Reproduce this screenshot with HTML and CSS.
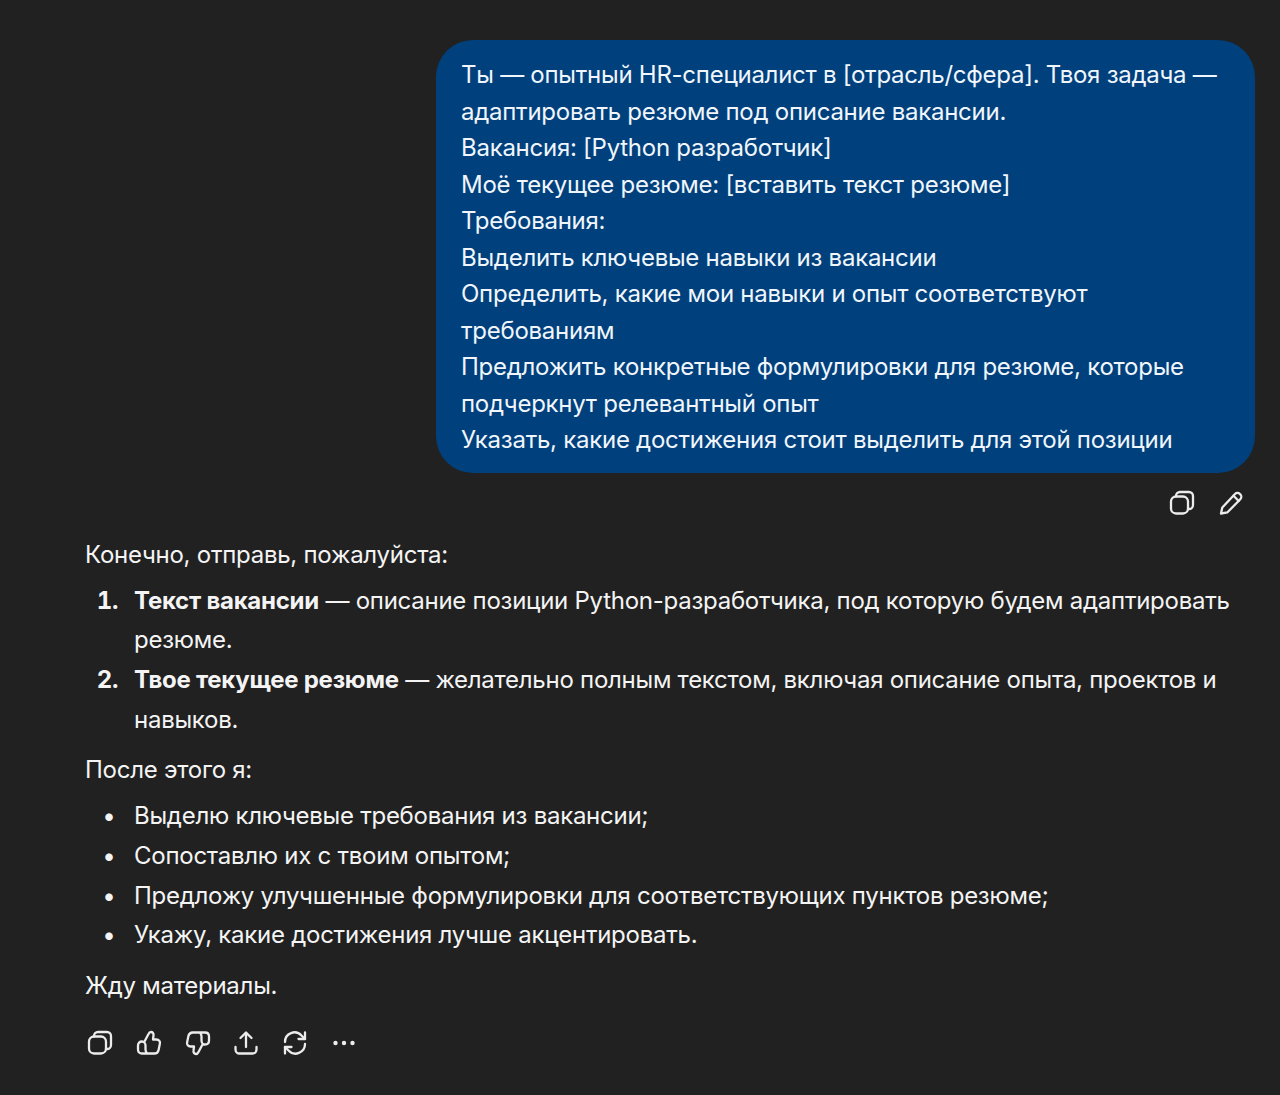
FILE: index.html
```html
<!DOCTYPE html>
<html lang="ru">
<head>
    <meta charset="UTF-8">
    <meta name="viewport" content="width=device-width, initial-scale=1.0">
    <title>Чат</title>
    <link rel="stylesheet" href="styles.css">
</head>
<body>

    <!-- Сообщение пользователя -->
    <div class="user-msg">
        <div class="bubble">
            <p>Ты — опытный HR-специалист в [отрасль/сфера]. Твоя задача — адаптировать резюме под описание вакансии.</p>
            <p>Вакансия: [Python разработчик]</p>
            <p>Моё текущее резюме: [вставить текст резюме]</p>
            <p>Требования:</p>
            <p>Выделить ключевые навыки из вакансии</p>
            <p>Определить, какие мои навыки и опыт соответствуют требованиям</p>
            <p>Предложить конкретные формулировки для резюме, которые подчеркнут релевантный опыт</p>
            <p>Указать, какие достижения стоит выделить для этой позиции</p>
        </div>
        <div class="user-actions">
            <svg class="icon" viewBox="0 0 26 26"><rect x="2" y="6.500" width="17" height="17" rx="5"/><path d="M7 6.500V6a4 4 0 0 1 4-4h9a4 4 0 0 1 4 4v9a4 4 0 0 1-4 4h-1"/></svg>
            <svg class="icon" viewBox="0 0 26 26"><path d="M3 23.500l1.300-6L17 4a3.400 3.400 0 0 1 4.900 0l.4.4a3.400 3.400 0 0 1 0 4.800L9.500 22.300z"/><path d="M15.500 5.800l5.200 5.200"/></svg>
        </div>
    </div>

    <!-- Ответ -->
    <div class="answer">
        <p class="para">Конечно, отправь, пожалуйста:</p>
        <ol class="list">
            <li><b>Текст вакансии</b> — описание позиции Python-разработчика, под которую будем адаптировать резюме.</li>
            <li><b>Твое текущее резюме</b> — желательно полным текстом, включая описание опыта, проектов и навыков.</li>
        </ol>
        <p class="para">После этого я:</p>
        <ul class="list">
            <li>Выделю ключевые требования из вакансии;</li>
            <li>Сопоставлю их с твоим опытом;</li>
            <li>Предложу улучшенные формулировки для соответствующих пунктов резюме;</li>
            <li>Укажу, какие достижения лучше акцентировать.</li>
        </ul>
        <p class="para">Жду материалы.</p>

        <div class="answer-actions">
            <svg class="icon" viewBox="0 0 26 26"><rect x="2" y="6.500" width="17" height="17" rx="5"/><path d="M7 6.500V6a4 4 0 0 1 4-4h9a4 4 0 0 1 4 4v9a4 4 0 0 1-4 4h-1"/></svg>
            <svg class="icon" viewBox="0 0 26 26"><path d="M8.500 11.500L12.500 4c.6-1.300 1.500-2 2.500-2 1.700 0 2.800 1.400 2.500 3.300L17 9.500h3.500c2.300 0 3.900 1.900 3.400 4.100l-1.300 6.300c-.5 2.200-2 3.600-4.300 3.600H6c-2.400 0-4-1.700-4-4v-4c0-2.300 1.600-4 4-4 2 0 3.500 1.700 3.500 4v4c0 1.800.7 3 1.800 4"/></svg>
            <svg class="icon" viewBox="0 0 26 26"><path d="M17.500 14.500L13.500 22c-.6 1.300-1.500 2-2.500 2-1.700 0-2.800-1.400-2.500-3.300L9 16.500H5.500c-2.300 0-3.900-1.900-3.400-4.100l1.300-6.300C3.900 3.900 5.400 2.500 7.700 2.500H20c2.400 0 4 1.700 4 4v4c0 2.300-1.600 4-4 4-2 0-3.500-1.700-3.500-4v-4c0-1.800-.7-3-1.800-4"/></svg>
            <svg class="icon" viewBox="0 0 26 26"><path d="M13 17V3M7.500 8L13 2.500 18.500 8"/><path d="M2.500 17v2.500a4 4 0 0 0 4 4h13a4 4 0 0 0 4-4V17"/></svg>
            <svg class="icon" viewBox="0 0 26 26"><path d="M3 12a9.500 9.500 0 0 1 16.500-6.500L23 9"/><path d="M23 2.500V9h-6.500"/><path d="M23 14a9.500 9.500 0 0 1-16.500 6.500L3 17"/><path d="M3 23.500V17h6.500"/></svg>
            <svg class="icon dots" viewBox="0 0 26 26"><circle cx="4.500" cy="13" r="2.200"/><circle cx="13" cy="13" r="2.200"/><circle cx="21.500" cy="13" r="2.200"/></svg>
        </div>
    </div>

</body>
</html>
```

FILE: styles.css
```css
body {
    margin: 0;
    padding: 40px 25px 0 85px;
    background-color: #212121;
    color: #f4f4f4;
    font-family: Inter, "Noto Sans", sans-serif;
    font-size: 24px;
    letter-spacing: -0.26px;
}

p {
    margin: 0;
}

.user-msg {
    display: flex;
    flex-direction: column;
    align-items: flex-end;
}

.bubble {
    box-sizing: border-box;
    width: 819px;
    height: 433px;
    padding: 17px 25px 0;
    border-radius: 37px;
    background-color: #00407c;
    color: #f0f6fb;
    line-height: 36.5px;
}

.user-actions {
    display: flex;
    gap: 23px;
    margin-top: 17px;
    margin-right: 11px;
}

.icon {
    display: block;
    width: 26px;
    height: 26px;
    fill: none;
    stroke: #ececec;
    stroke-width: 2.300;
    stroke-linecap: round;
    stroke-linejoin: round;
}

.dots {
    fill: #ececec;
    stroke: none;
}

.answer {
    margin-top: 19px;
}

.para {
    line-height: 40px;
}

.list {
    margin: 5.500px 0 11px;
    padding-left: 49px;
    line-height: 39.700px;
}

ul.list {
    margin-top: 6px;
}

ol.list li::marker {
    content: counter(list-item) ".  \2009";
    font-weight: 700;
}

ul.list li::marker {
    content: "•   ";
}

.list b {
    font-weight: 700;
}

.answer-actions {
    display: flex;
    gap: 22.800px;
    margin-top: 24px;
    margin-left: 2px;
}
```
